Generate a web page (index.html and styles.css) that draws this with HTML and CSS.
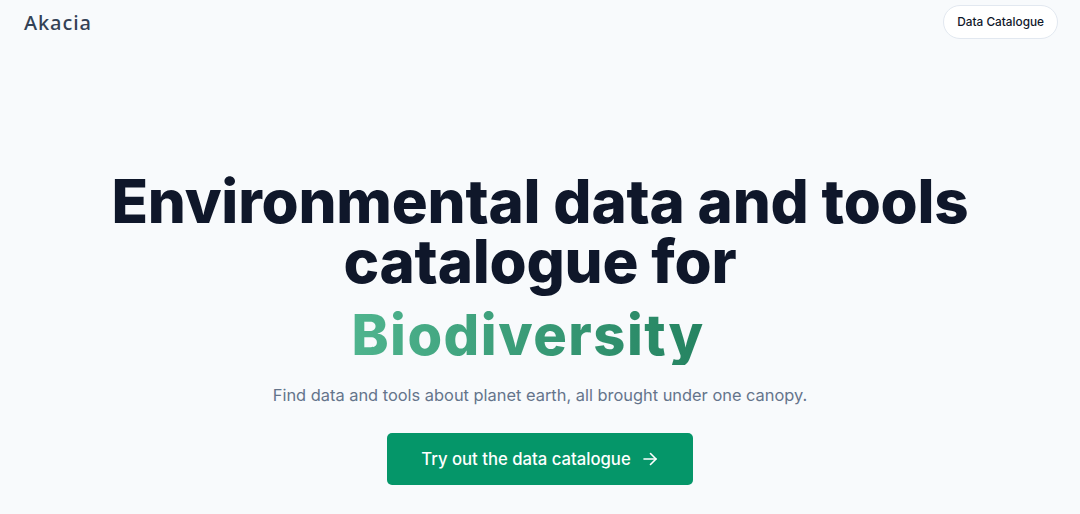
FILE: index.html
```html
<!DOCTYPE html>
<html lang="en">

<head>
  <meta charset="UTF-8">
  <meta name="viewport" content="width=device-width, initial-scale=1.0">
  <title>Akacia</title>
  <link rel="stylesheet" href="styles.css">
</head>

<body>
  <header class="topbar">
    <a class="logo" href="#">Akacia</a>
    <a class="nav-pill" href="#">Data Catalogue</a>
  </header>

  <main class="hero">
    <h1 class="hero-title">Environmental data and tools<br>catalogue for</h1>
    <div class="hero-accent">Biodiversity</div>
    <p class="hero-sub">Find data and tools about planet earth, all brought under one canopy.</p>
    <a class="cta" href="#">
      Try out the data catalogue
      <svg width="14" height="14" viewBox="0 0 14 14" fill="none" stroke="currentColor" stroke-width="1.6" stroke-linecap="round" stroke-linejoin="round">
        <path d="M1 7h12"></path>
        <path d="M7.5 1.5L13 7l-5.5 5.5"></path>
      </svg>
    </a>
  </main>
</body>

</html>
```

FILE: styles.css
```css
body {
  margin: 0;
  background: #f8fafc;
  font-family: Inter, "Noto Sans", sans-serif;
  color: #0f172a;
}

a {
  text-decoration: none;
}

.topbar {
  display: flex;
  justify-content: space-between;
  align-items: center;
  padding: 5px 22px 0 24px;
}

.logo {
  font-family: "Noto Sans", sans-serif;
  font-size: 20px;
  font-weight: 500;
  color: #334155;
  letter-spacing: 0.9px;
}

.nav-pill {
  display: inline-block;
  padding: 0 13px;
  height: 32px;
  line-height: 32px;
  border: 1px solid #e2e8f0;
  border-radius: 999px;
  background: #fff;
  font-size: 11.8px;
  font-weight: 500;
  color: #0f172a;
}

.hero {
  display: flex;
  flex-direction: column;
  align-items: center;
  text-align: center;
  padding-top: 132px;
}

.hero-title {
  margin: 0;
  font-size: 60px;
  line-height: 60px;
  font-weight: 800;
  letter-spacing: -0.2px;
  color: #0f172a;
}

.hero-accent {
  margin-top: 14px;
  padding-right: 24px;
  font-size: 56px;
  line-height: 60px;
  font-weight: 800;
  letter-spacing: 1.5px;
  background: linear-gradient(90deg, #4fb48e, #22805e);
  -webkit-background-clip: text;
  background-clip: text;
  color: transparent;
}

.hero-sub {
  margin: 16px 0 0;
  font-size: 16.4px;
  line-height: 28px;
  color: #64748b;
}

.cta {
  margin-top: 24px;
  display: flex;
  align-items: center;
  gap: 12px;
  height: 52px;
  padding: 0 36px 0 34px;
  border-radius: 5px;
  background: #059669;
  color: #fff;
  font-size: 16.7px;
  font-weight: 500;
}
```
